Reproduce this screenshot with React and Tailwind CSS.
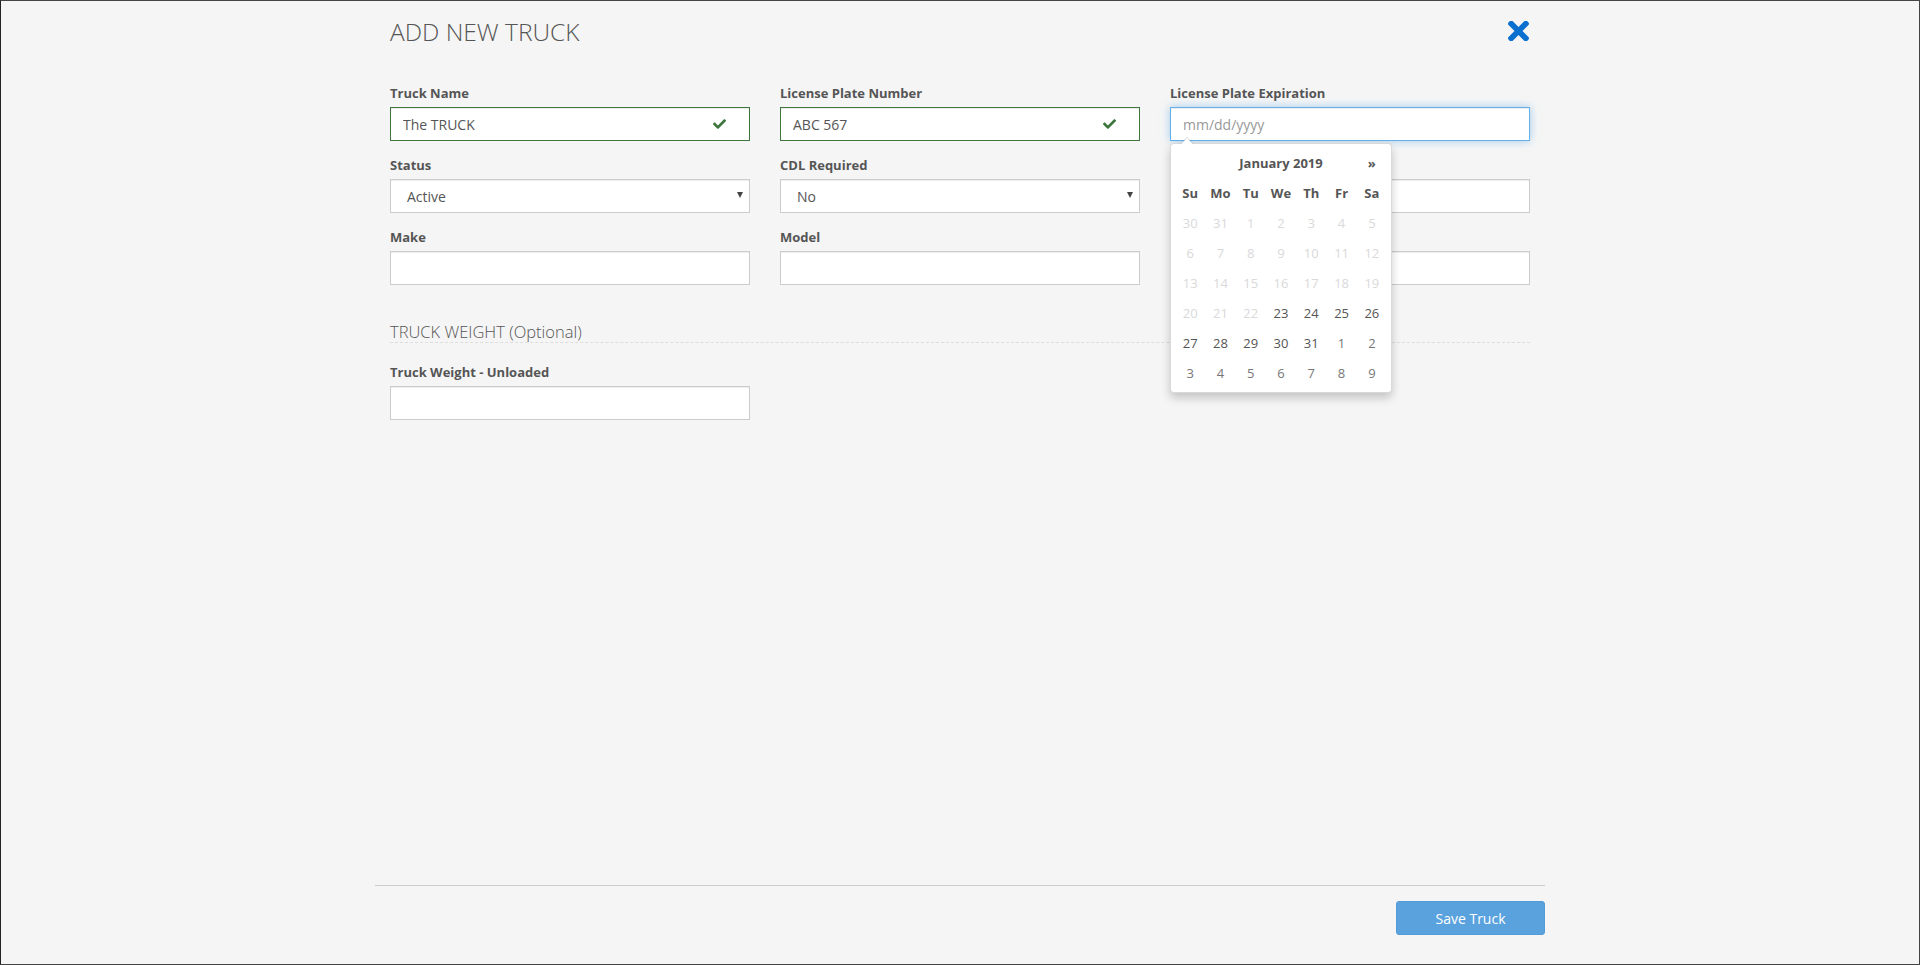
import React from "react";

const font = { fontFamily: '"Open Sans", "Noto Sans", sans-serif' };

function Check() {
  return (
    <svg
      viewBox="0 65 512 382"
      width="13"
      height="10"
      className="absolute right-[24px] top-[12px]"
      aria-hidden="true"
    >
      <path
        fill="#3c763d"
        d="M173.898 439.404l-166.4-166.4c-9.997-9.997-9.997-26.206 0-36.204l36.203-36.204c9.997-9.998 26.207-9.998 36.204 0L192 312.69 432.095 72.596c9.997-9.997 26.207-9.997 36.204 0l36.203 36.204c9.997 9.997 9.997 26.206 0 36.204l-294.4 294.401c-9.998 9.997-26.207 9.997-36.204-.001z"
      />
    </svg>
  );
}

function Label({ children }) {
  return (
    <label className="block text-[13px] leading-[18px] font-bold text-[#555] mb-[5px]">
      {children}
    </label>
  );
}

function TextInput({ value = "", success = false, placeholder = "" }) {
  return (
    <div className="relative">
      <input
        readOnly
        value={value}
        placeholder={placeholder}
        className={
          "block w-full h-[34px] px-[12px] bg-white text-[14px] text-[#555] placeholder:text-[#999] outline-none border shadow-[inset_0_1px_1px_rgba(0,0,0,0.075)] " +
          (success ? "border-[#3c763d]" : "border-[#ccc]")
        }
        style={font}
      />
      {success && <Check />}
    </div>
  );
}

function SelectInput({ value }) {
  return (
    <div className="relative">
      <select
        value={value}
        onChange={() => {}}
        className="block w-full h-[34px] pl-[16px] pr-[24px] bg-white text-[14px] text-[#555] appearance-none outline-none border border-[#ccc] rounded-none shadow-[inset_0_1px_1px_rgba(0,0,0,0.075)]"
        style={font}
      >
        <option>{value}</option>
      </select>
      <svg
        viewBox="0 0 6 6"
        width="6"
        height="6"
        className="absolute right-[7px] top-[13px] pointer-events-none"
        aria-hidden="true"
      >
        <polygon points="0,0 6,0 3,6" fill="#444" />
      </svg>
    </div>
  );
}

const weeks = [
  [["30", "old"], ["31", "old"], ["1", "dis"], ["2", "dis"], ["3", "dis"], ["4", "dis"], ["5", "dis"]],
  [["6", "dis"], ["7", "dis"], ["8", "dis"], ["9", "dis"], ["10", "dis"], ["11", "dis"], ["12", "dis"]],
  [["13", "dis"], ["14", "dis"], ["15", "dis"], ["16", "dis"], ["17", "dis"], ["18", "dis"], ["19", "dis"]],
  [["20", "dis"], ["21", "dis"], ["22", "dis"], ["23", "on"], ["24", "on"], ["25", "on"], ["26", "on"]],
  [["27", "on"], ["28", "on"], ["29", "on"], ["30", "on"], ["31", "on"], ["1", "new"], ["2", "new"]],
  [["3", "new"], ["4", "new"], ["5", "new"], ["6", "new"], ["7", "new"], ["8", "new"], ["9", "new"]],
];

function dayClass(kind) {
  if (kind === "on") return "text-[#555]";
  if (kind === "new") return "text-[#777]";
  return "text-[#d9d9d9]";
}

function Datepicker() {
  return (
    <div className="absolute left-0 top-[36px] z-10 w-[222px] bg-white border border-[rgba(0,0,0,0.15)] rounded-[4px] shadow-[0_5px_10px_rgba(0,0,0,0.2)] p-[4px]">
      <div className="absolute -top-[7px] left-[9px] w-0 h-0 border-l-[7px] border-r-[7px] border-b-[7px] border-l-transparent border-r-transparent border-b-[rgba(0,0,0,0.15)]" />
      <div className="absolute -top-[6px] left-[10px] w-0 h-0 border-l-[6px] border-r-[6px] border-b-[6px] border-l-transparent border-r-transparent border-b-white" />
      <div className="grid grid-cols-7 text-[13px] text-center">
        <div className="h-[30px]" />
        <div className="col-span-5 h-[30px] leading-[30px] font-bold text-[#555]">January 2019</div>
        <div className="h-[30px] leading-[30px] font-bold text-[#555]">»</div>
        {["Su", "Mo", "Tu", "We", "Th", "Fr", "Sa"].map((d) => (
          <div key={d} className="h-[30px] leading-[30px] font-bold text-[#555]">
            {d}
          </div>
        ))}
        {weeks.map((w, i) =>
          w.map(([n, k], j) => (
            <div key={i + "-" + j} className={"h-[30px] leading-[30px] " + dayClass(k)}>
              {n}
            </div>
          ))
        )}
      </div>
    </div>
  );
}

export default function App() {
  return (
    <div
      className="w-full h-[965px] flex flex-col bg-[#f5f5f5] border border-[#444] border-l-[#222]"
      style={font}
    >
      <div className="flex-1">
        <div className="w-[1140px] mx-auto">
          <div className="flex justify-between items-start pt-[14px] h-[83px]">
            <h1 className="text-[24.5px] leading-[34px] font-light text-[#555]">ADD NEW TRUCK</h1>
            <button className="mt-[6px] mr-[1px]" aria-label="Close">
              <svg viewBox="0 89 352 334" width="21" height="20" aria-hidden="true">
                <path
                  fill="#0a6fce"
                  d="M242.72 256l100.07-100.07c12.28-12.28 12.28-32.19 0-44.48l-22.24-22.24c-12.28-12.28-32.19-12.28-44.48 0L176 189.28 75.930 89.21c-12.28-12.28-32.19-12.280-44.48 0L9.21 111.45c-12.28 12.28-12.28 32.19 0 44.48L109.28 256 9.21 356.07c-12.28 12.28-12.28 32.19 0 44.48l22.24 22.24c12.28 12.28 32.2 12.28 44.48 0L176 322.72l100.07 100.07c12.28 12.28 32.2 12.28 44.48 0l22.24-22.24c12.28-12.28 12.28-32.19 0-44.48L242.72 256z"
                />
              </svg>
            </button>
          </div>

          <div className="grid grid-cols-3 gap-x-[30px]">
            <div className="mb-[15px]">
              <Label>Truck Name</Label>
              <TextInput value="The TRUCK" success />
            </div>
            <div className="mb-[15px]">
              <Label>License Plate Number</Label>
              <TextInput value="ABC 567" success />
            </div>
            <div className="mb-[15px]">
              <Label>License Plate Expiration</Label>
              <div className="relative">
                <input
                  readOnly
                  placeholder="mm/dd/yyyy"
                  className="block w-full h-[34px] px-[12px] bg-white text-[14px] text-[#555] placeholder:text-[#999] outline-none border border-[#66afe9] shadow-[inset_0_1px_1px_rgba(0,0,0,0.075),0_0_8px_rgba(102,175,233,0.6)]"
                  style={font}
                />
                <Datepicker />
              </div>
            </div>

            <div className="mb-[15px]">
              <Label>Status</Label>
              <SelectInput value="Active" />
            </div>
            <div className="mb-[15px]">
              <Label>CDL Required</Label>
              <SelectInput value="No" />
            </div>
            <div className="mb-[15px]">
              <Label>Registration State</Label>
              <TextInput />
            </div>

            <div className="mb-[15px]">
              <Label>Make</Label>
              <TextInput />
            </div>
            <div className="mb-[15px]">
              <Label>Model</Label>
              <TextInput />
            </div>
            <div className="mb-[15px]">
              <Label>Year</Label>
              <TextInput />
            </div>
          </div>

          <h2 className="pt-[22px] text-[16.5px] leading-[20px] font-light text-[#555] border-b border-dashed border-[#ddd]">
            TRUCK WEIGHT (Optional)
          </h2>

          <div className="grid grid-cols-3 gap-x-[30px] mt-[20px]">
            <div>
              <Label>Truck Weight - Unloaded</Label>
              <TextInput />
            </div>
          </div>
        </div>
      </div>

      <div className="w-[1170px] mx-auto border-t border-[#ccc] pt-[15px] pb-[29px] flex justify-end">
        <button
          className="w-[149px] h-[34px] rounded-[3px] bg-[#5aa2dd] border border-[#529bd6] text-white text-[14px]"
          style={font}
        >
          Save Truck
        </button>
      </div>
    </div>
  );
}
